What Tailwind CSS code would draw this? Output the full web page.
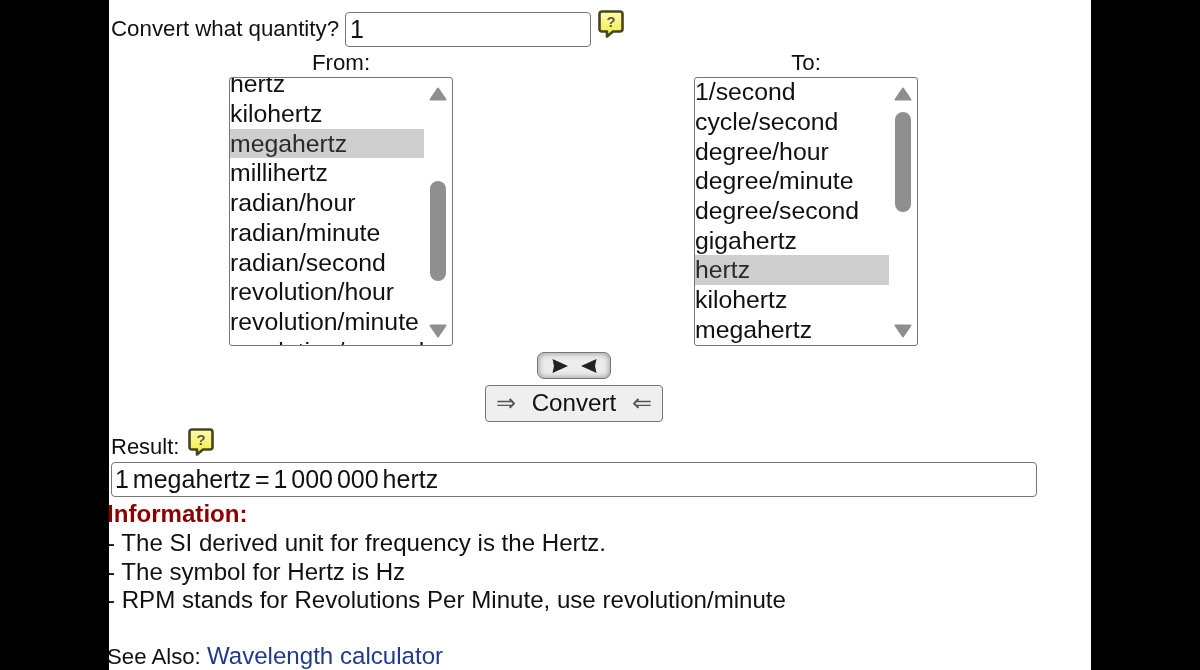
<!DOCTYPE html>
<html lang="en">
<head>
  <meta charset="UTF-8">
  <title>Frequency converter</title>
  <script src="https://cdn.jsdelivr.net/npm/@tailwindcss/browser@4"></script>
</head>
<body class="bg-black h-[670px] overflow-hidden font-['Liberation_Sans',Arial,sans-serif] text-[#111]">
  <main class="mx-[109px] w-[982px] h-[670px] bg-white overflow-hidden blur-[0.5px]">
    <form class="w-[930px]">
      <!-- quantity -->
      <div class="flex items-start h-[48px] pt-[10px] pl-[2px]">
        <label class="text-[22.3px] leading-[26px] mt-[6px] mr-[6px]">Convert what quantity?</label>
        <div class="w-[246px] h-[35px] mt-[2px] border border-[#767676] rounded-[4px] pl-[4px] text-[25px] leading-[32px] bg-white">1</div>
        <svg class="ml-[7px] w-[26px] h-[28px]" viewBox="0 0 26 28">
          <defs>
            <linearGradient id="bubble" x1="0" y1="0" x2="0" y2="1">
              <stop offset="0" stop-color="#fdfbb0"/>
              <stop offset="1" stop-color="#f4ee3c"/>
            </linearGradient>
          </defs>
          <path d="M4 1.5H22Q24.5 1.5 24.5 4V19Q24.5 21.5 22 21.5H15L9 26.5V21.5H4Q1.5 21.5 1.5 19V4Q1.5 1.5 4 1.5Z" fill="url(#bubble)" stroke="#45451f" stroke-width="2.6" stroke-linejoin="round"/>
          <text x="13" y="17" text-anchor="middle" font-size="15" font-weight="700" fill="#555">?</text>
        </svg>
      </div>

      <!-- unit lists -->
      <div class="flex pl-[120px] gap-[241px] mt-[3px]">
        <div class="w-[224px]">
          <div class="text-center text-[22.3px] leading-[24px] h-[26px]">From:</div>
          <div class="relative w-[224px] h-[269px] border border-[#767676] rounded-[3px] overflow-hidden text-[24.8px] leading-[29.7px]">
            <div class="-mt-[8.7px] w-[194px] whitespace-nowrap">
              <div>hertz</div>
              <div>kilohertz</div>
              <div class="bg-[#cecece] text-[#2a2a2a]">megahertz</div>
              <div>millihertz</div>
              <div>radian/hour</div>
              <div>radian/minute</div>
              <div>radian/second</div>
              <div>revolution/hour</div>
              <div>revolution/minute</div>
              <div>revolution/second</div>
            </div>
            <svg class="absolute left-[199px] top-[9px] w-[18px] h-[14px]" viewBox="0 0 18 14"><path d="M9 1.5L16.5 12.5H1.5Z" fill="#8f8f8f" stroke="#8f8f8f" stroke-width="2" stroke-linejoin="round"/></svg>
            <div class="absolute left-[200px] top-[103px] w-[16px] h-[100px] rounded-[8px] bg-[#8f8f8f]"></div>
            <svg class="absolute left-[199px] top-[246px] w-[18px] h-[14px]" viewBox="0 0 18 14"><path d="M9 12.5L16.5 1.5H1.5Z" fill="#8f8f8f" stroke="#8f8f8f" stroke-width="2" stroke-linejoin="round"/></svg>
          </div>
        </div>
        <div class="w-[224px]">
          <div class="text-center text-[22.3px] leading-[24px] h-[26px]">To:</div>
          <div class="relative w-[224px] h-[269px] border border-[#767676] rounded-[3px] overflow-hidden text-[24.8px] leading-[29.7px]">
            <div class="-mt-[0.8px] w-[194px] whitespace-nowrap">
              <div>1/second</div>
              <div>cycle/second</div>
              <div>degree/hour</div>
              <div>degree/minute</div>
              <div>degree/second</div>
              <div>gigahertz</div>
              <div class="bg-[#cecece] text-[#2a2a2a]">hertz</div>
              <div>kilohertz</div>
              <div>megahertz</div>
            </div>
            <svg class="absolute left-[199px] top-[9px] w-[18px] h-[14px]" viewBox="0 0 18 14"><path d="M9 1.5L16.5 12.5H1.5Z" fill="#8f8f8f" stroke="#8f8f8f" stroke-width="2" stroke-linejoin="round"/></svg>
            <div class="absolute left-[200px] top-[34px] w-[16px] h-[100px] rounded-[8px] bg-[#8f8f8f]"></div>
            <svg class="absolute left-[199px] top-[246px] w-[18px] h-[14px]" viewBox="0 0 18 14"><path d="M9 12.5L16.5 1.5H1.5Z" fill="#8f8f8f" stroke="#8f8f8f" stroke-width="2" stroke-linejoin="round"/></svg>
          </div>
        </div>
      </div>

      <!-- buttons -->
      <div class="flex flex-col items-center mt-[6px]">
        <button type="button" class="w-[74px] h-[27px] rounded-[7px] border border-[#777] bg-[#ececec] shadow-[inset_0_0_6px_#888] flex items-center justify-center gap-[13px]">
          <svg class="w-[16px] h-[14px]" viewBox="0 0 16 14"><path d="M0.5 0L16 7L0.5 14L2 7Z" fill="#222"/></svg>
          <svg class="w-[16px] h-[14px]" viewBox="0 0 16 14"><path d="M15.5 0L0 7L15.5 14L14 7Z" fill="#222"/></svg>
        </button>
        <button type="button" class="w-[178px] h-[37px] mt-[6px] rounded-[4px] border border-[#767676] bg-[#efefef] text-[24.2px] leading-[31px] pb-[3px] [word-spacing:9px]"><span class="text-[#555]">⇒</span> Convert <span class="text-[#555]">⇐</span></button>
      </div>

      <!-- result -->
      <div class="flex items-start h-[34px] mt-[6px] pl-[2px]">
        <span class="text-[22px] leading-[24px] mt-[7px] mr-[9px]">Result:</span>
        <svg class="w-[26px] h-[28px]" viewBox="0 0 26 28">
          <path d="M4 1.5H22Q24.5 1.5 24.5 4V19Q24.5 21.5 22 21.5H15L9 26.5V21.5H4Q1.5 21.5 1.5 19V4Q1.5 1.5 4 1.5Z" fill="url(#bubble)" stroke="#45451f" stroke-width="2.6" stroke-linejoin="round"/>
          <text x="13" y="17" text-anchor="middle" font-size="15" font-weight="700" fill="#555">?</text>
        </svg>
      </div>
      <div class="ml-[2px] w-[926px] h-[35px] border border-[#767676] rounded-[4px] pl-[3px] text-[25px] leading-[32px] [word-spacing:-3px]">1 megahertz = 1 000 000 hertz</div>
    </form>

    <!-- notes -->
    <section class="mt-[2px] -ml-[2px]">
      <h2 class="text-[24.1px] leading-[30px] font-bold text-[#8b0000]">Information:</h2>
      <p class="text-[24.1px] leading-[28.5px]">- The SI derived unit for frequency is the Hertz.</p>
      <p class="text-[24.1px] leading-[28.5px]">- The symbol for Hertz is Hz</p>
      <p class="text-[24.1px] leading-[28.5px]">- RPM stands for Revolutions Per Minute, use revolution/minute</p>
      <p class="mt-[26px] text-[22.2px] leading-[29px]">See Also: <a class="text-[24.1px] text-[#1f3a8f]" href="#">Wavelength calculator</a></p>
    </section>
  </main>
</body>
</html>
